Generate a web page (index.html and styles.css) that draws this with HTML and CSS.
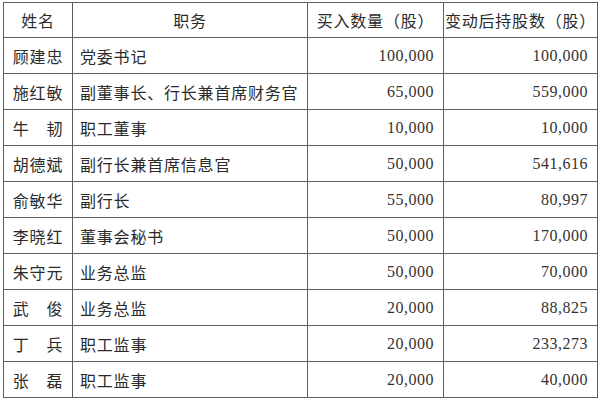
FILE: index.html
```html
<!DOCTYPE html>
<html lang="zh-CN">
<head>
<meta charset="utf-8">
<title>买入情况</title>
<link rel="stylesheet" href="styles.css">
</head>
<body>
<table class="grid">
  <colgroup>
    <col class="c-name">
    <col class="c-title">
    <col class="c-buy">
    <col class="c-hold">
  </colgroup>
  <thead>
    <tr>
      <th>姓名</th>
      <th>职务</th>
      <th>买入数量（股）</th>
      <th>变动后持股数（股）</th>
    </tr>
  </thead>
  <tbody>
    <tr><td class="name">顾建忠</td><td class="title">党委书记</td><td class="num">100,000</td><td class="num">100,000</td></tr>
    <tr><td class="name">施红敏</td><td class="title">副董事长、行长兼首席财务官</td><td class="num">65,000</td><td class="num">559,000</td></tr>
    <tr><td class="name">牛　韧</td><td class="title">职工董事</td><td class="num">10,000</td><td class="num">10,000</td></tr>
    <tr><td class="name">胡德斌</td><td class="title">副行长兼首席信息官</td><td class="num">50,000</td><td class="num">541,616</td></tr>
    <tr><td class="name">俞敏华</td><td class="title">副行长</td><td class="num">55,000</td><td class="num">80,997</td></tr>
    <tr><td class="name">李晓红</td><td class="title">董事会秘书</td><td class="num">50,000</td><td class="num">170,000</td></tr>
    <tr><td class="name">朱守元</td><td class="title">业务总监</td><td class="num">50,000</td><td class="num">70,000</td></tr>
    <tr><td class="name">武　俊</td><td class="title">业务总监</td><td class="num">20,000</td><td class="num">88,825</td></tr>
    <tr><td class="name">丁　兵</td><td class="title">职工监事</td><td class="num">20,000</td><td class="num">233,273</td></tr>
    <tr><td class="name">张　磊</td><td class="title">职工监事</td><td class="num">20,000</td><td class="num">40,000</td></tr>
  </tbody>
</table>
</body>
</html>
```
FILE: styles.css
```css
html, body {
  margin: 0;
  padding: 0;
  background: #ffffff;
}

body {
  padding: 2px 0 0 3px;
  font-family: "Noto Sans CJK SC", sans-serif;
  color: #2b2b2b;
}

.grid {
  border-collapse: collapse;
  table-layout: fixed;
  width: 594px;
}

.c-name { width: 69px; }
.c-title { width: 235px; }
.c-buy { width: 136px; }
.c-hold { width: 154px; }

.grid th,
.grid td {
  border: 1px solid #5e5e5e;
  height: 36px;
  padding: 0;
  box-sizing: border-box;
  font-size: 16px;
  font-weight: 400;
  letter-spacing: 0.8px;
  white-space: nowrap;
  vertical-align: middle;
  line-height: 1;
}

.grid th {
  height: 35px;
  text-align: center;
}

.grid td.name {
  text-align: center;
}

.grid td.title {
  text-align: left;
  padding-left: 7px;
}

.grid td.num {
  text-align: right;
  padding-right: 9px;
  letter-spacing: 0.5px;
  font-family: "Liberation Serif", "Noto Sans CJK SC", serif;
  color: #333333;
}
```
